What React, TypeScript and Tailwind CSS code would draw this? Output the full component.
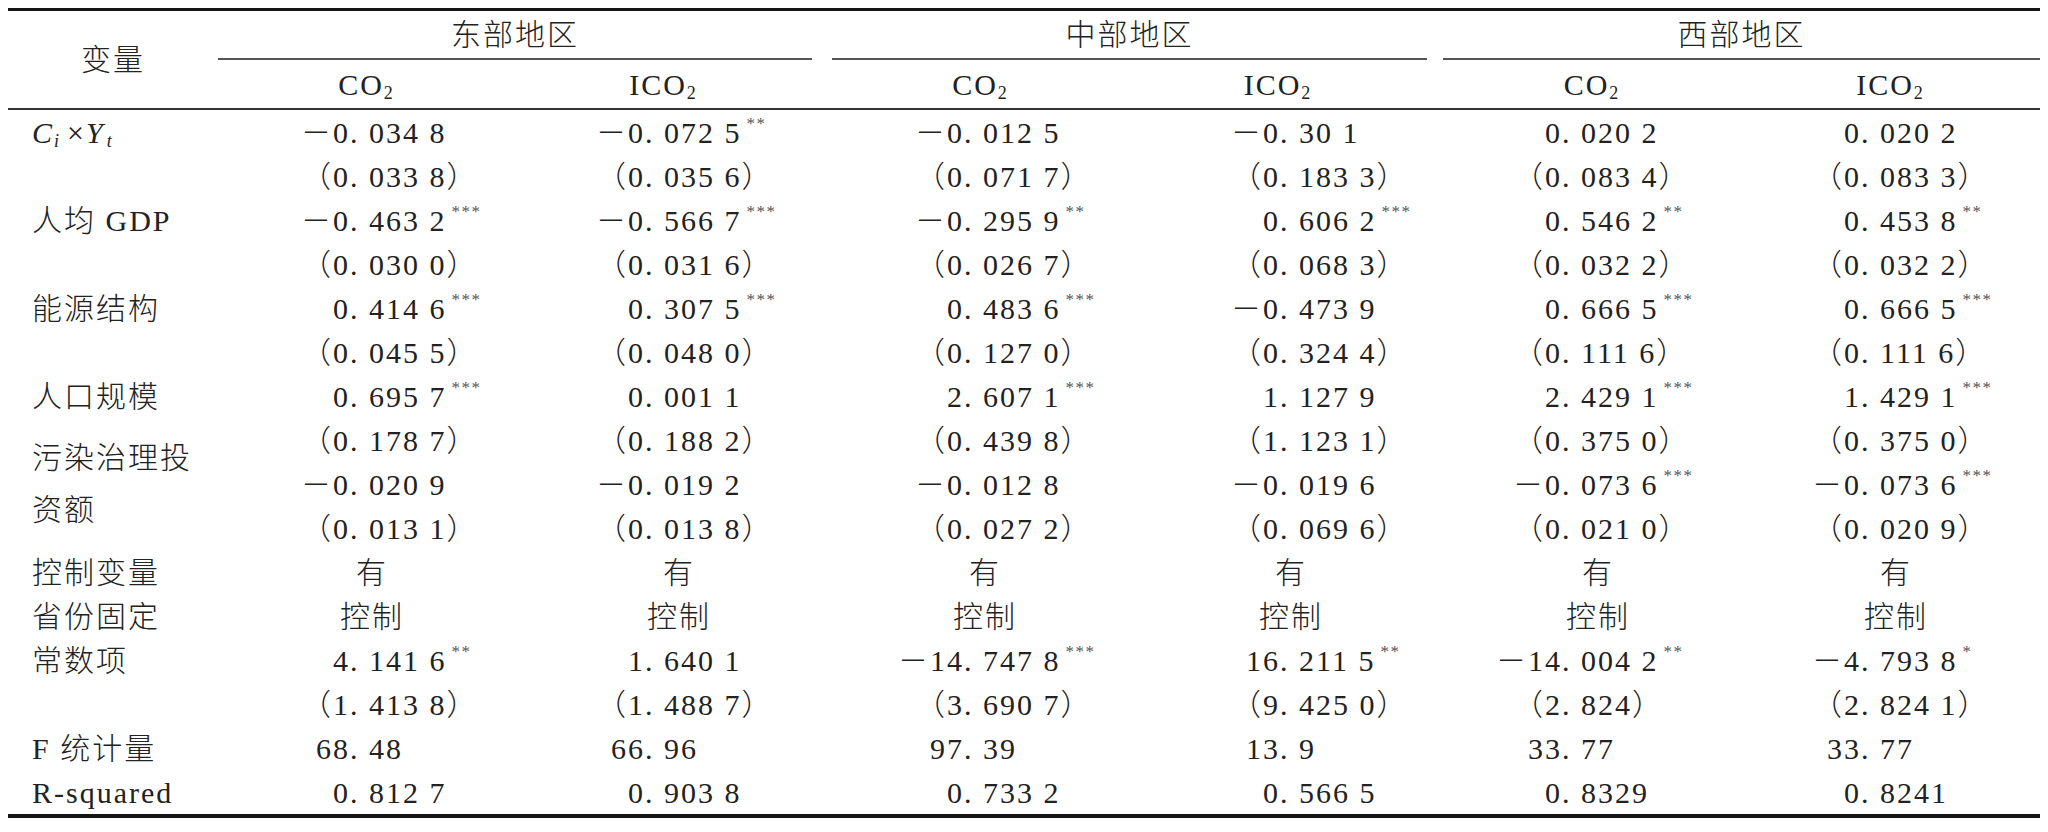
import type { ReactNode } from 'react';

type Col = { w: string; ml: string; dot: string; mid: string };

// 每列：宽度、左间距、小数点位置（整数部分宽度）、文字居中宽度
const cols: Col[] = [
  { w: 'w-[297px]', ml: '', dot: 'w-[132px]', mid: 'w-[308px]' },
  { w: 'w-[297px]', ml: '', dot: 'w-[130px]', mid: 'w-[328px]' },
  { w: 'w-[297px]', ml: 'ml-[20px]', dot: 'w-[132px]', mid: 'w-[306px]' },
  { w: 'w-[298px]', ml: '', dot: 'w-[151px]', mid: 'w-[324px]' },
  { w: 'w-[298px]', ml: 'ml-[16px]', dot: 'w-[119px]', mid: 'w-[310px]' },
  { w: 'w-[299px]', ml: '', dot: 'w-[120px]', mid: 'w-[310px]' },
];

const groups = [
  { name: '东部地区', w: 'w-[594px]', ml: '' },
  { name: '中部地区', w: 'w-[595px]', ml: 'ml-[20px]' },
  { name: '西部地区', w: 'w-[597px]', ml: 'ml-[16px]' },
];

const subHeads = ['CO', 'ICO', 'CO', 'ICO', 'CO', 'ICO'];

type Row = { label?: ReactNode; vals: string[] };

const CxY = (
  <span>
    <i>C</i>
    <sub className="italic text-[18px]">i</sub>
    <span className="ml-[6px]">×</span>
    <i>Y</i>
    <sub className="italic text-[18px] ml-[2px]">t</sub>
  </span>
);

const rows: Row[] = [
  { label: CxY, vals: ['-0.034 8', '-0.072 5**', '-0.012 5', '-0.30 1', '0.020 2', '0.020 2'] },
  { vals: ['(0.033 8)', '(0.035 6)', '(0.071 7)', '(0.183 3)', '(0.083 4)', '(0.083 3)'] },
  { label: '人均 GDP', vals: ['-0.463 2***', '-0.566 7***', '-0.295 9**', '0.606 2***', '0.546 2**', '0.453 8**'] },
  { vals: ['(0.030 0)', '(0.031 6)', '(0.026 7)', '(0.068 3)', '(0.032 2)', '(0.032 2)'] },
  { label: '能源结构', vals: ['0.414 6***', '0.307 5***', '0.483 6***', '-0.473 9', '0.666 5***', '0.666 5***'] },
  { vals: ['(0.045 5)', '(0.048 0)', '(0.127 0)', '(0.324 4)', '(0.111 6)', '(0.111 6)'] },
  { label: '人口规模', vals: ['0.695 7***', '0.001 1', '2.607 1***', '1.127 9', '2.429 1***', '1.429 1***'] },
  { vals: ['(0.178 7)', '(0.188 2)', '(0.439 8)', '(1.123 1)', '(0.375 0)', '(0.375 0)'] },
  {
    label: (
      <div className="flex flex-col">
        <div className="h-[52px] leading-[52px]">污染治理投</div>
        <div className="h-[52px] leading-[52px]">资额</div>
      </div>
    ),
    vals: ['-0.020 9', '-0.019 2', '-0.012 8', '-0.019 6', '-0.073 6***', '-0.073 6***'],
  },
  { vals: ['(0.013 1)', '(0.013 8)', '(0.027 2)', '(0.069 6)', '(0.021 0)', '(0.020 9)'] },
  { label: '控制变量', vals: ['有', '有', '有', '有', '有', '有'] },
  { label: '省份固定', vals: ['控制', '控制', '控制', '控制', '控制', '控制'] },
  { label: '常数项', vals: ['4.141 6**', '1.640 1', '-14.747 8***', '16.211 5**', '-14.004 2**', '-4.793 8*'] },
  { vals: ['(1.413 8)', '(1.488 7)', '(3.690 7)', '(9.425 0)', '(2.824)', '(2.824 1)'] },
  { label: 'F 统计量', vals: ['68.48', '66.96', '97.39', '13.9', '33.77', '33.77'] },
  { label: 'R-squared', vals: ['0.812 7', '0.903 8', '0.733 2', '0.566 5', '0.8329', '0.8241'] },
];

function parseNum(s: string) {
  const m = /^(\()?(-)?(\d+)\.([\d ]+?)(\))?(\*+)?$/.exec(s);
  if (!m) return { int: s, frac: '', stars: '' };
  return {
    int: (m[1] ? '（' : '') + (m[2] ? '－' : '') + m[3],
    frac: '. ' + m[4] + (m[5] ? '）' : ''),
    stars: m[6] ?? '',
  };
}

function Cell({ value, col }: { value: string; col: Col }) {
  if (!/\d/.test(value)) {
    return (
      <div className={`${col.w} ${col.ml} shrink-0 flex items-center`}>
        <div className={`${col.mid} shrink-0 text-center`}>{value}</div>
      </div>
    );
  }
  const { int, frac, stars } = parseNum(value);
  return (
    <div className={`${col.w} ${col.ml} shrink-0 flex items-center whitespace-pre`}>
      <span className={`${col.dot} shrink-0 text-right`}>{int}</span>
      <span>{frac}</span>
      {stars && (
        <span className="ml-[5px] text-[17px] tracking-[1.5px] text-[#555] relative -top-[8px]">{stars}</span>
      )}
    </div>
  );
}

export default function App() {
  return (
    <div className="w-[2048px] h-[832px] bg-white pl-[8px] pt-[8px] text-[#222] text-[30px] font-light tracking-[2px] font-['Liberation_Serif','Noto_Sans_CJK_SC',serif]">
      <div className="w-[2032px]">
        <div className="h-[3px] bg-[#141414]" />

        {/* 表头 */}
        <div className="flex h-[97px]">
          <div className="w-[210px] shrink-0 flex items-center justify-center">变量</div>
          <div className="flex flex-col">
            <div className="flex h-[47px]">
              {groups.map(g => (
                <div key={g.name} className={`${g.w} ${g.ml} shrink-0 flex items-center justify-center`}>
                  {g.name}
                </div>
              ))}
            </div>
            <div className="flex h-[2px]">
              {groups.map(g => (
                <div key={g.name} className={`${g.w} ${g.ml} shrink-0 bg-[#555]`} />
              ))}
            </div>
            <div className="flex h-[48px]">
              {cols.map((c, i) => (
                <div key={i} className={`${c.w} ${c.ml} shrink-0 flex items-center justify-center`}>
                  <span>
                    {subHeads[i]}
                    <sub className="text-[18px]">2</sub>
                  </span>
                </div>
              ))}
            </div>
          </div>
        </div>
        <div className="h-[2px] bg-[#333]" />

        {/* 数据行 */}
        {rows.map((r, ri) => (
          <div key={ri} className="flex h-[44px]">
            <div className="w-[210px] shrink-0 pl-[24px] flex items-center">{r.label}</div>
            {r.vals.map((v, ci) => (
              <Cell key={ci} value={v} col={cols[ci]} />
            ))}
          </div>
        ))}

        <div className="h-[4px] bg-[#141414]" />
      </div>
    </div>
  );
}
